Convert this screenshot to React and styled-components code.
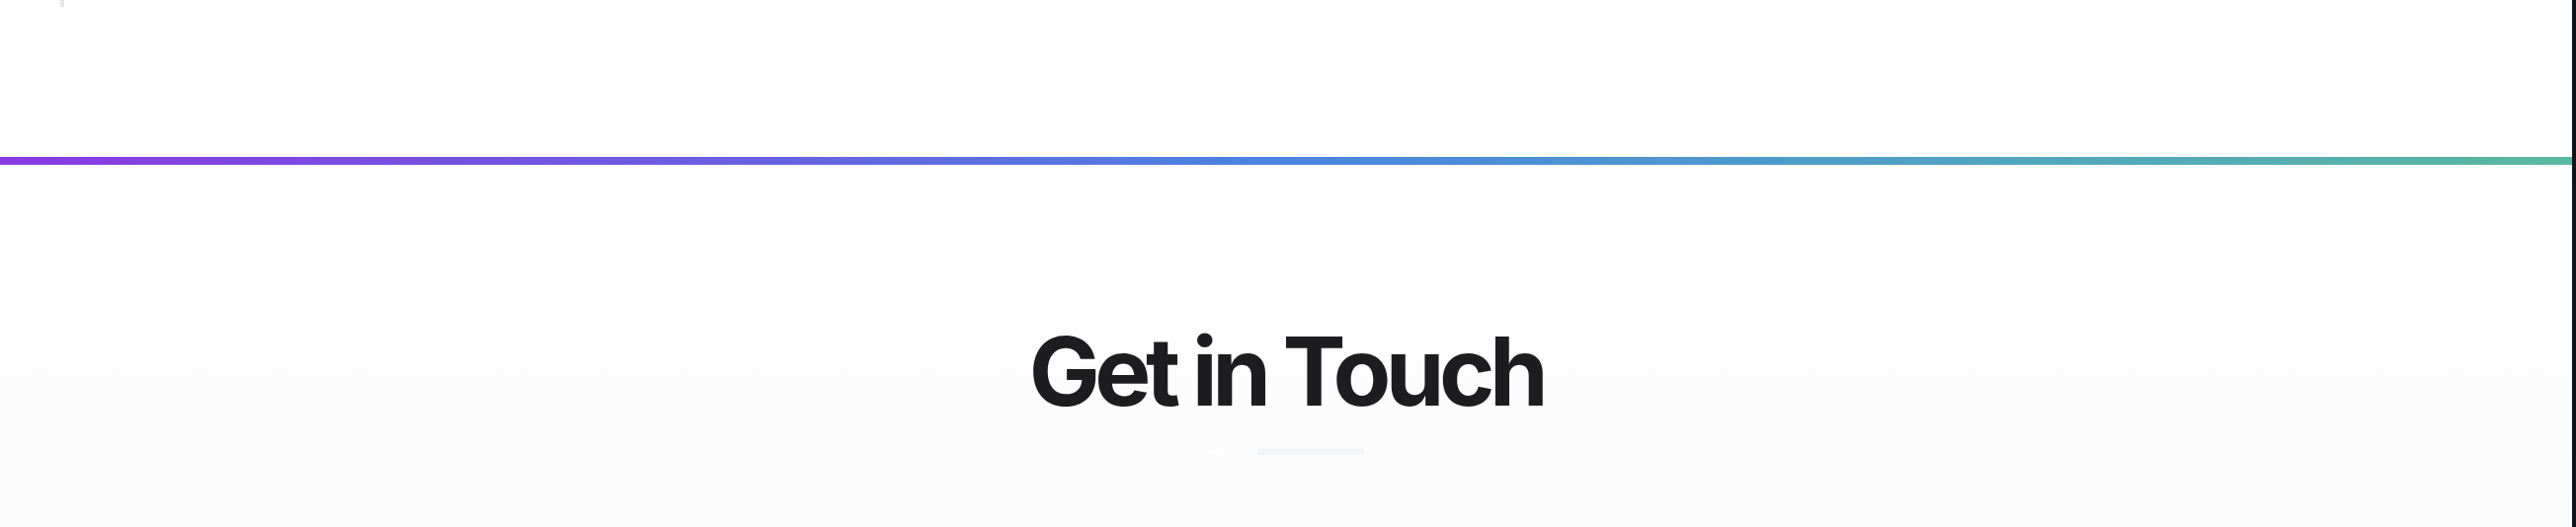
import React from "react";
import styled, { createGlobalStyle } from "styled-components";

const Global = createGlobalStyle`
  html, body { margin: 0; padding: 0; background: #ffffff; }
  body { font-family: Inter, "Noto Sans", sans-serif; overflow: hidden; }
`;

const Page = styled.div`
  display: flex;
  width: 2608px;
  height: 534px;
  overflow: hidden;
`;

const Main = styled.div`
  flex: 1;
  display: flex;
  flex-direction: column;
  min-width: 0;
`;

const EdgeBar = styled.div`
  width: 4px;
  flex: none;
  background: #111318;
`;

const TopBand = styled.div`
  height: 159px;
  flex: none;
  background: #ffffff;
  padding-left: 61px;
  box-sizing: border-box;
`;

const Tick = styled.div`
  width: 4px;
  height: 7px;
  background: #e4e6ea;
`;

const GradientRule = styled.div`
  height: 8px;
  flex: none;
  background: linear-gradient(90deg, #8a3ae2 0%, #6a5fe2 28%, #4b84e0 50%, #4f9fc8 72%, #5ab9a0 100%);
`;

const Section = styled.section`
  flex: 1;
  display: flex;
  flex-direction: column;
  align-items: center;
  padding-top: 161px;
  background: linear-gradient(180deg, #ffffff 0%, #fbfbfb 100%);
`;

const Heading = styled.h2`
  margin: 0;
  font-family: Inter, "Noto Sans", sans-serif;
  font-weight: 700;
  font-size: 96px;
  line-height: 1;
  letter-spacing: -0.058em;
  color: #1d1d1f;
`;

const Faint = styled.div`
  display: flex;
  align-items: center;
  gap: 32px;
  margin-top: 30px;
`;

const FaintBit = styled.div`
  width: ${(p) => p.$w}px;
  height: 7px;
  border-radius: 4px;
  background: ${(p) => p.$c};
`;

export default function App() {
  return (
    <>
      <Global />
      <Page>
        <Main>
          <TopBand>
            <Tick />
          </TopBand>
          <GradientRule />
          <Section>
            <Heading>Get in Touch</Heading>
            <Faint>
              <FaintBit $w={18} $c="#ffffff" />
              <FaintBit $w={108} $c="#f4f5f7" />
            </Faint>
          </Section>
        </Main>
        <EdgeBar />
      </Page>
    </>
  );
}
